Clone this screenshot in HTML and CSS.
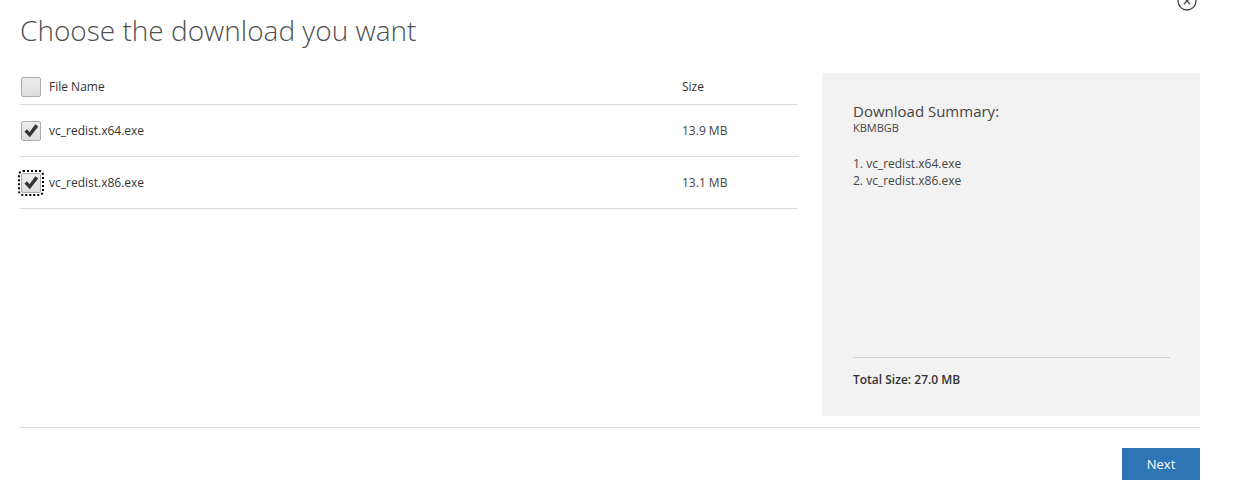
FILE: index.html
```html
<!DOCTYPE html>
<html lang="en">

<head>
    <meta charset="UTF-8">
    <meta name="viewport" content="width=device-width, initial-scale=1.0">
    <title>Choose the download you want</title>
    <link rel="stylesheet" href="styles.css">
</head>

<body>
    <div class="dialog">
        <button class="close" aria-label="Close">
            <svg width="22" height="22" viewBox="0 0 22 22">
                <circle cx="11" cy="11" r="9" fill="none" stroke="#444" stroke-width="1.3" />
                <path d="M7.8 7.8 L14.2 14.2 M14.2 7.8 L7.8 14.2" stroke="#444" stroke-width="1.3" />
            </svg>
        </button>

        <h1 class="title">Choose the download you want</h1>

        <div class="content">
            <div class="files">
                <div class="row head">
                    <span class="check"></span>
                    <span class="name">File Name</span>
                    <span class="size">Size</span>
                </div>
                <div class="row">
                    <span class="check">
                        <svg class="tick" width="18" height="18" viewBox="0 0 18 18">
                            <path d="M2.5 9.5 L5 7.3 L7.5 10.3 L13.3 2.3 L16.2 4.5 L7.8 15.3 Z" fill="#333" />
                        </svg>
                    </span>
                    <span class="name">vc_redist.x64.exe</span>
                    <span class="size">13.9 MB</span>
                </div>
                <div class="row">
                    <span class="check focused">
                        <svg class="tick" width="18" height="18" viewBox="0 0 18 18">
                            <path d="M2.5 9.5 L5 7.3 L7.5 10.3 L13.3 2.3 L16.2 4.5 L7.8 15.3 Z" fill="#333" />
                        </svg>
                    </span>
                    <span class="name">vc_redist.x86.exe</span>
                    <span class="size">13.1 MB</span>
                </div>
            </div>

            <div class="summary">
                <div class="summary-title">Download Summary:</div>
                <div class="summary-sub">KBMBGB</div>
                <ol class="summary-list">
                    <li>1. vc_redist.x64.exe</li>
                    <li>2. vc_redist.x86.exe</li>
                </ol>
                <div class="total">Total Size: 27.0 MB</div>
            </div>
        </div>

        <div class="footer">
            <button class="next">Next</button>
        </div>
    </div>
</body>

</html>
```

FILE: styles.css
```css
html, body {
    margin: 0;
    padding: 0;
    background: #fff;
}

body {
    font-family: "Open Sans", "Noto Sans", sans-serif;
    color: #333;
}

.dialog {
    position: relative;
    width: 1180px;
    padding-left: 20px;
}

.close {
    position: absolute;
    top: -10px;
    left: 1176px;
    padding: 0;
    border: none;
    background: none;
}

.title {
    margin: 0;
    padding-top: 10px;
    height: 73px;
    box-sizing: border-box;
    font-size: 28px;
    font-weight: 300;
    color: #505050;
    line-height: 40px;
}

.content {
    display: flex;
    gap: 24px;
    height: 343px;
}

.files {
    width: 778px;
}

.row {
    display: flex;
    align-items: center;
    height: 51px;
    border-bottom: 1px solid #d9d9d9;
    font-size: 12px;
}

/* header sits a little higher than the data rows */
.row.head {
    align-items: flex-start;
    height: 27px;
    padding-top: 4px;
    line-height: 19px;
}

.check {
    position: relative;
    flex: none;
    width: 18px;
    height: 18px;
    margin-left: 1px;
    border: 1px solid #ababab;
    border-radius: 2px;
    background: linear-gradient(#ececec, #dedede);
}

.tick {
    display: block;
}

.check.focused {
    outline: 2px dotted #000;
    outline-offset: 1px;
}

.name {
    width: 633px;
    margin-left: 8px;
}

.size {
    color: #444;
}

.head .name, .head .size {
    color: #333;
}

.summary {
    display: flex;
    flex-direction: column;
    width: 317px;
    padding: 28px 30px 0 31px;
    background: #f2f2f2;
}

.summary-title {
    font-size: 15px;
    line-height: 20px;
    color: #444;
}

.summary-sub {
    font-size: 11px;
    line-height: 13px;
    color: #444;
}

.summary-list {
    margin: 21px 0 0;
    padding: 0;
    list-style: none;
    font-size: 12px;
    line-height: 17px;
    color: #444;
}

.total {
    margin-top: auto;
    margin-bottom: 28px;
    padding-top: 13px;
    border-top: 1px solid #d0d0d0;
    font-size: 12px;
    font-weight: 600;
    line-height: 17px;
    color: #333;
}

.footer {
    display: flex;
    justify-content: flex-end;
    margin-top: 11px;
    padding-top: 20px;
    border-top: 1px solid #d9d9d9;
}

.next {
    width: 78px;
    height: 32px;
    border: none;
    background: #2e75b6;
    color: #fff;
    font-family: "Open Sans", sans-serif;
    font-size: 13px;
}
```
